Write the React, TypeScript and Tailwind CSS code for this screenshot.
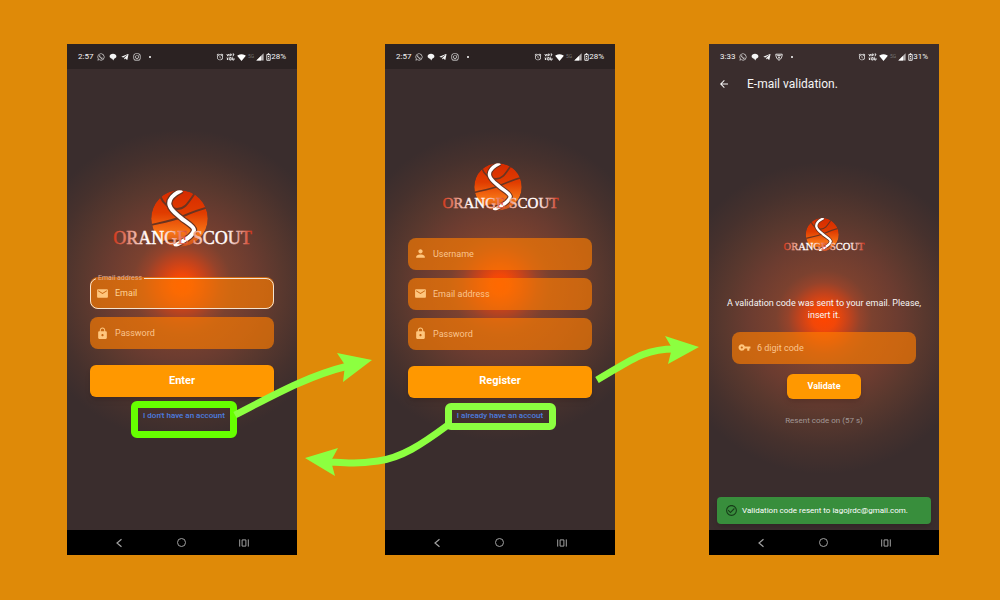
import type { ReactNode } from "react";
import { FaInstagram, FaTelegramPlane, FaWhatsapp } from "react-icons/fa";
import {
  MdAlarm,
  MdArrowBack,
  MdCheckCircleOutline,
  MdEmail,
  MdLock,
  MdPerson,
  MdSignalWifi4Bar,
  MdVpnKey,
} from "react-icons/md";

function ChatBlob() {
  return (
    <svg viewBox="0 0 8 8" className="size-2" fill="currentColor" aria-hidden="true">
      <path d="M4 .8C5.800.8 7.400 1.700 7.400 3.300 7.400 4.600 6.400 5.400 5.200 5.700L4.200 7.400 3.200 5.700C1.700 5.500.6 4.600.6 3.300.6 1.700 2.200.8 4 .8Z" />
    </svg>
  );
}

function ShieldIcon() {
  return (
    <svg viewBox="0 0 8 8" className="size-2" fill="none" stroke="currentColor" aria-hidden="true">
      <path d="M.8 1.200H7.200C7.200 4 6 6.200 4 7.300 2 6.200.8 4 .8 1.200Z" strokeWidth=".9" />
      <path d="M2.200 2.600H5.800M3 4.200H5M4 4.200V5.800" strokeWidth=".9" />
    </svg>
  );
}

function StatusBar({ time, battery, shield = false, className }: { time: string; battery: string; shield?: boolean; className: string }) {
  return (
    <header className={`flex h-[25px] items-center justify-between px-[11px] pt-px text-[8px] leading-none text-neutral-100 ${className}`}>
      <div className="flex items-center gap-1">
        <span>{time}</span>
        <FaWhatsapp className="size-2" />
        <ChatBlob />
        <FaTelegramPlane className="size-2" />
        {shield ? <ShieldIcon /> : <FaInstagram className="size-2" />}
        <span className="ml-1 size-0.5 rounded-full bg-white" />
      </div>
      <div className="flex items-center gap-0.5">
        <MdAlarm className="size-2" />
        <svg viewBox="0 0 9 8" className="h-2 w-[9px]" fill="none" stroke="currentColor" strokeWidth=".9" aria-hidden="true">
          <path d="M.8 1 1.800 3.200 2.800 1M3.900 3.300V1.100H5.300V2.300H3.900M6.600 1H8L6.900 3.300M1 4.600 2 7M2.200 4.600 1.200 7M3.700 4.600V7H5.200V4.600ZM6.600 4.300V7H8V5.200" />
        </svg>
        <MdSignalWifi4Bar className="size-[9px] text-white" />
        <span className="-mt-0.5 text-[5px] text-neutral-500">5G</span>
        <svg viewBox="0 0 8 8" className="size-2" aria-hidden="true">
          <path d="M.3 7.600 7.600.3V7.600Z" fill="#b8b3b3" />
          <path d="M.3 7.600 5 2.900V7.600Z" fill="#fff" />
        </svg>
        <div className="flex items-center">
          <svg viewBox="0 0 5 8" className="h-2 w-[5px]" fill="none" stroke="currentColor" aria-hidden="true">
            <path d="M.8 1.500H4.200V7.300H.8ZM1.800.6H3.200" strokeWidth=".9" />
            <path d="M2.500 2.800V4.200M2.500 5.200V6.300" strokeWidth="1" />
          </svg>
          <span>{battery}</span>
        </div>
      </div>
    </header>
  );
}

function NavBar() {
  return (
    <nav aria-label="System" className="flex h-[25px] items-center justify-between bg-black px-12 text-neutral-400">
      <button type="button" aria-label="Back" className="flex w-2 justify-center">
        <svg viewBox="0 0 8 10" className="h-2.5 w-2" fill="none" stroke="currentColor" strokeWidth="1.200">
          <path d="M6.500 1.200 2 5 6.500 8.800" />
        </svg>
      </button>
      <button type="button" aria-label="Home" className="size-[9px] rounded-full border border-neutral-400" />
      <button type="button" aria-label="Recent apps">
        <svg viewBox="0 0 10 8" className="h-2 w-2.5" fill="none" stroke="currentColor">
          <path d="M.7.4V7.600M9.300.4V7.600M3.100.9H6.900V7.100H3.100Z" />
        </svg>
      </button>
    </nav>
  );
}

function Logo({ id, className }: { id: string; className: string }) {
  return (
    <svg viewBox="0 0 137 58" className={`mx-auto block overflow-visible ${className}`} role="img" aria-label="Orange Scout">
      <defs>
        <linearGradient id={`${id}-ball`} x1="0" y1="0" x2="0" y2="1">
          <stop offset="0" stopColor="#d62a00" />
          <stop offset=".4" stopColor="#e03c00" />
          <stop offset=".75" stopColor="#f77416" />
          <stop offset="1" stopColor="#c9501c" />
        </linearGradient>
        <linearGradient id={`${id}-text`} gradientUnits="userSpaceOnUse" x1="0" y1="0" x2="137" y2="0">
          <stop offset="0" stopColor="#d2391d" />
          <stop offset=".14" stopColor="#eba898" />
          <stop offset=".24" stopColor="#fff" />
          <stop offset=".34" stopColor="#fff" />
          <stop offset=".42" stopColor="#f5c4b4" />
          <stop offset=".52" stopColor="#dc5236" />
          <stop offset=".6" stopColor="#efaa98" />
          <stop offset=".7" stopColor="#fff" />
          <stop offset=".82" stopColor="#fff" />
          <stop offset=".92" stopColor="#e6a091" />
          <stop offset="1" stopColor="#d2391d" />
        </linearGradient>
        <clipPath id={`${id}-clip`}>
          <circle cx="65.500" cy="28.500" r="28.300" />
        </clipPath>
      </defs>
      <g clipPath={`url(#${id}-clip)`} fill="none">
        <circle cx="65.500" cy="28.500" r="28.300" fill={`url(#${id}-ball)`} />
        <path d="M46 6C49 13 55 19 63 19S74 13 81 3M37 35C50 32 60 30 67 27S83 20 95 17M46 54C53 49 60 50 70 53" stroke="#6b3420" strokeWidth="2" />
        <path d="M68 0C60 4 54 9 55.500 15S64 25 67 28 80 36 80 40C79.500 46 70 51 60 56" stroke="#6b3420" strokeWidth="6.500" />
        <path d="M68 0C60 4 54 9 55.500 15S64 25 67 28 80 36 80 40C79.500 46 70 51 60 56" stroke="#fff" strokeWidth="4" />
      </g>
      <text x="68.500" y="54" textAnchor="middle" fontSize="18" fill={`url(#${id}-text)`} stroke={`url(#${id}-text)`} strokeWidth=".5" className="font-['Liberation_Serif',serif]">
        ORANGE SCOUT
      </text>
    </svg>
  );
}

function Field({ id, label, icon, type = "text" }: { id: string; label: string; icon: ReactNode; type?: string }) {
  return (
    <label htmlFor={id} className="flex h-8 items-center gap-1.5 rounded-lg bg-[#ff7d00]/65 px-1.5 text-[#ffc67d]">
      {icon}
      <input id={id} type={type} aria-label={label} placeholder={label} className="min-w-0 flex-1 bg-transparent pt-0.5 text-[9px] outline-none placeholder:text-[#fac48e]" />
    </label>
  );
}

function ActiveEmailField() {
  return (
    <div className="relative flex h-8 items-center gap-1.5 rounded-lg bg-[#ff7d00]/65 px-1.5 text-[#ffc67d]">
      <fieldset className="pointer-events-none absolute inset-x-0 -top-[3px] bottom-0 rounded-lg border border-[#f6e4cf] pl-[5px]">
        <legend className="h-2 px-0.5 text-[7px] leading-[8px] text-[#dfae90]">
          <label htmlFor="login-email" className="block">Email address</label>
        </legend>
      </fieldset>
      <MdEmail className="size-[13px] shrink-0" />
      <input id="login-email" type="email" placeholder="Email" className="min-w-0 flex-1 bg-transparent pt-0.5 text-[9px] outline-none placeholder:text-[#ffd596]" />
    </div>
  );
}

function Phone({ label, glow, children }: { label: string; glow: string; children: ReactNode }) {
  return (
    <section aria-label={label} className={`flex min-h-[511px] w-[230px] shrink-0 flex-col bg-[#3a2d2d] ${glow}`}>
      {children}
      <NavBar />
    </section>
  );
}

const upperGlow =
  "bg-[radial-gradient(circle_at_115px_241px,#ff4500_0px,#f24708_10px,#c5431b_24px,#94432b_38px,#7b412f_50px,#6b3c30_75px,#59382e_100px,#46312d_130px,#3a2d2d_156px)]";
const lowerGlow =
  "bg-[radial-gradient(circle_at_115px_274px,#ff4500_0px,#f24708_12px,#c5431b_24px,#94432b_36px,#7b412f_48px,#6b3c30_75px,#59382e_100px,#46312d_130px,#3a2d2d_156px)]";

const primaryButton = "rounded-md bg-[#ff9800] font-bold text-white shadow-md";

export default function App() {
  return (
    <main className="flex min-h-screen items-start justify-center bg-[#df8a08] pt-11 pl-1.5 font-['Roboto',sans-serif]">
      <div className="relative flex">
        <Phone label="Sign in" glow={upperGlow}>
          <StatusBar time="2:57" battery="28%" className="bg-[#2b2222]" />
          <div className="flex flex-1 flex-col px-[23px] pt-[121px]">
            <Logo id="login" className="w-[137px]" />
            <form className="mt-[29px] flex flex-col gap-2">
              <ActiveEmailField />
              <Field id="login-password" label="Password" type="password" icon={<MdLock className="size-[13px] shrink-0" />} />
              <button type="button" className={`mt-2 h-8 text-[11px] ${primaryButton}`}>Enter</button>
            </form>
            <a href="#register" className="mt-1 ml-[41px] flex h-[37px] w-[106px] justify-center rounded-md border-[7px] border-[#66ff00] pt-[3px] text-[8px] leading-[10px] font-medium whitespace-nowrap text-[#4c7ee0]">
              I don't have an account
            </a>
          </div>
        </Phone>

        <div className="ml-[88px]">
          <Phone label="Register" glow={upperGlow}>
            <StatusBar time="2:57" battery="28%" className="bg-[#2b2222]" />
            <div className="flex flex-1 flex-col px-[23px] pt-[94px]">
              <Logo id="register" className="w-[115px]" />
              <form className="mt-[26px] flex flex-col gap-2">
                <Field id="register-name" label="Username" icon={<MdPerson className="size-[13px] shrink-0" />} />
                <Field id="register-email" label="Email address" type="email" icon={<MdEmail className="size-[13px] shrink-0" />} />
                <Field id="register-password" label="Password" type="password" icon={<MdLock className="size-[13px] shrink-0" />} />
                <button type="button" className={`mt-2 h-8 text-[11px] ${primaryButton}`}>Register</button>
              </form>
              <a href="#login" className="mx-auto mt-[5px] flex h-[27px] w-[111px] items-center justify-center rounded-md border-[7px] border-[#8cff40] text-[8px] leading-[10px] font-medium whitespace-nowrap text-[#4c7ee0]">
                I already have an accout
              </a>
            </div>
          </Phone>
        </div>

        <div className="ml-[94px]">
          <Phone label="E-mail validation" glow={lowerGlow}>
            <StatusBar time="3:33" battery="31%" shield className="" />
            <div className="flex h-[30px] items-center gap-[17px] px-[9px] text-neutral-100">
              <button type="button" aria-label="Go back"><MdArrowBack className="size-3" /></button>
              <h1 className="text-[12px]">E-mail validation.</h1>
            </div>
            <div className="flex flex-1 flex-col px-[23px] pt-[119px]">
              <Logo id="validate" className="w-20" />
              <p className="-mx-3 mt-[45px] text-center text-[9px] leading-3 text-neutral-100">
                A validation code was sent to your email. Please, insert it.
              </p>
              <form className="mt-[11px] flex flex-col">
                <Field id="code" label="6 digit code" icon={<MdVpnKey className="size-[13px] shrink-0" />} />
                <button type="button" className={`mx-auto mt-2.5 h-[25px] w-[74px] text-[9px] ${primaryButton}`}>Validate</button>
              </form>
              <p className="mt-4 text-center text-[8px] leading-3 text-[#a29897]">Resent code on (57 s)</p>
            </div>
            <div role="status" className="mx-2 mb-1.5 flex h-[27px] items-center gap-1 rounded-sm bg-[#388e3c] px-2 text-[8px] text-white shadow-md">
              <MdCheckCircleOutline className="size-[13px] shrink-0 text-[#173d19]" />
              Validation code resent to iagojrdc@gmail.com.
            </div>
          </Phone>
        </div>

        <svg viewBox="0 0 872 511" className="pointer-events-none absolute inset-0 size-full" aria-hidden="true">
          <g fill="none" stroke="#8cff40" strokeWidth="7">
            <path d="M168 371C205 352 240 332 281 322" />
            <path d="M530 336C566 315 577 305 608 305" strokeLinecap="butt" />
            <path d="M381 381C354 401 334 414 311 417S280 419 263 418" />
          </g>
          <g fill="#8cff40">
            <path d="M305 316 270 309 278 321 276 338Z" />
            <path d="M632 303 598 292 605 304 601 320Z" />
            <path d="M238 414 271 404 264 417 268 432Z" />
          </g>
        </svg>
      </div>
    </main>
  );
}
